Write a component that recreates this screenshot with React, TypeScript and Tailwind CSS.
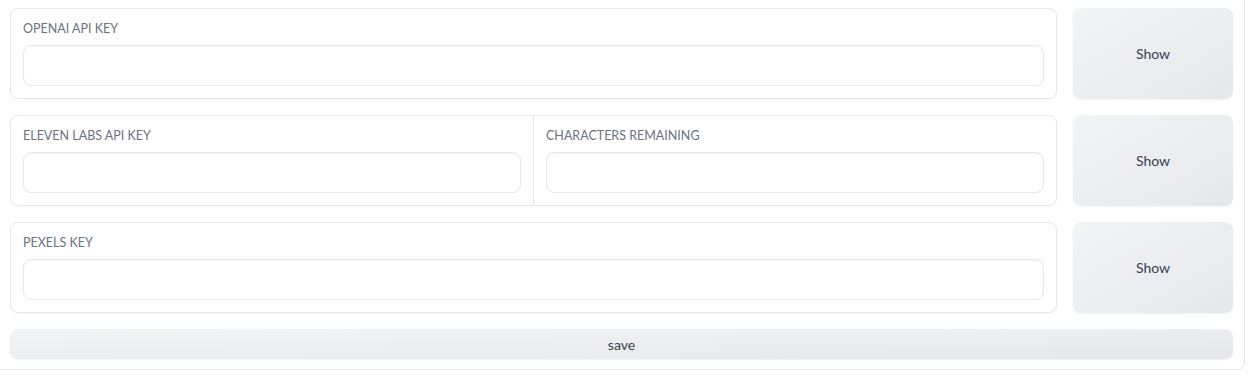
import type { ReactNode } from 'react';

const font = { fontFamily: '"Source Sans Pro", Lato, "Liberation Sans", sans-serif' };

function Field({ label }: { label: string }) {
  return (
    <label className="flex flex-col gap-2 p-3 flex-1">
      <span className="text-[12.5px] leading-4 uppercase text-[#6b7280]">{label}</span>
      <input
        type="password"
        className="h-[41px] w-full rounded-lg border border-[#e5e7eb] bg-white shadow-[inset_0_1px_2px_rgba(0,0,0,0.04)] outline-none"
      />
    </label>
  );
}

function ShowButton() {
  return (
    <button className="w-[160px] shrink-0 rounded-lg bg-gradient-to-br from-[#f3f4f6] to-[#e5e7eb] text-[14px] text-[#374151] shadow-[0_1px_2px_rgba(0,0,0,0.05)]">
      Show
    </button>
  );
}

function Row({ children }: { children: ReactNode }) {
  return (
    <div className="flex gap-4">
      <div className="flex flex-1 rounded-lg border border-[#e5e7eb] bg-white shadow-[0_1px_2px_rgba(0,0,0,0.03)]">
        {children}
      </div>
      <ShowButton />
    </div>
  );
}

export default function App() {
  return (
    <div className="bg-white w-[1255px] h-[385px]" style={font}>
      <div className="w-[1245px] border-r border-b border-[#e5e7eb] rounded-br-lg pl-[10px] pr-[11px] pt-[8px] pb-[10px] flex flex-col gap-4">
        <Row>
          <Field label="OpenAI API Key" />
        </Row>
        <Row>
          <Field label="Eleven Labs API Key" />
          <div className="w-px bg-[#e5e7eb]" />
          <Field label="Characters Remaining" />
        </Row>
        <Row>
          <Field label="Pexels Key" />
        </Row>
        <button className="h-[30px] w-full rounded-lg bg-gradient-to-br from-[#f3f4f6] to-[#e5e7eb] text-[14px] text-[#374151] shadow-[0_1px_2px_rgba(0,0,0,0.05)]">
          save
        </button>
      </div>
    </div>
  );
}
